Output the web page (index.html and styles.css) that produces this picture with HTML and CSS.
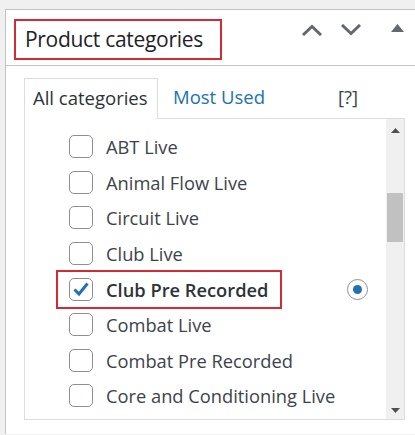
FILE: index.html
```html
<!DOCTYPE html>
<html>
<head>
<meta charset="utf-8">
<link rel="stylesheet" href="styles.css">
</head>
<body>
<div class="postbox">
  <div class="postbox-header">
    <h2 class="hndle"><span class="title-box">Product categories</span></h2>
    <div class="handle-actions">
      <svg class="act act-up" width="22" height="12" viewBox="0 0 22 12"><path d="M2 11 L11 2.5 L20 11" fill="none" stroke="#646970" stroke-width="3"/></svg>
      <svg class="act act-down" width="22" height="12" viewBox="0 0 22 12"><path d="M2 1 L11 9.5 L20 1" fill="none" stroke="#646970" stroke-width="3"/></svg>
      <svg class="act act-toggle" width="13" height="8" viewBox="0 0 13 8"><path d="M0 8 L6.5 0 L13 8 Z" fill="#646970"/></svg>
    </div>
  </div>
  <div class="inside">
    <div class="tabs-row">
      <div class="tab tab-active">All categories</div>
      <div class="tab tab-link">Most Used</div>
      <div class="tab-help">[?]</div>
    </div>
    <div class="tabs-panel">
      <ul class="cat-list">
        <li class="cat"><span class="cb"></span><span class="label">ABT Live</span></li>
        <li class="cat"><span class="cb"></span><span class="label">Animal Flow Live</span></li>
        <li class="cat"><span class="cb"></span><span class="label">Circuit Live</span></li>
        <li class="cat"><span class="cb"></span><span class="label">Club Live</span></li>
        <li class="cat cat-selected">
          <span class="hl-box"><span class="cb cb-checked"><svg width="18" height="16" viewBox="0 0 18 16"><path d="M2.5 8.5 L7 13 L15.5 2.5" fill="none" stroke="#2271b1" stroke-width="3"/></svg></span><span class="label label-bold">Club Pre Recorded</span></span>
          <span class="radio"><span class="radio-dot"></span></span>
        </li>
        <li class="cat"><span class="cb"></span><span class="label">Combat Live</span></li>
        <li class="cat"><span class="cb"></span><span class="label">Combat Pre Recorded</span></li>
        <li class="cat"><span class="cb"></span><span class="label">Core and Conditioning Live</span></li>
        <li class="cat"><span class="cb"></span></li>
      </ul>
      <div class="scrollbar">
        <svg class="sb-arrow" width="9" height="5" viewBox="0 0 9 5"><path d="M0 5 L4.5 0 L9 5 Z" fill="#505050"/></svg>
        <div class="sb-track"><div class="sb-thumb"></div></div>
        <svg class="sb-arrow" width="9" height="5" viewBox="0 0 9 5"><path d="M0 0 L4.5 5 L9 0 Z" fill="#505050"/></svg>
      </div>
    </div>
  </div>
</div>
</body>
</html>
```

FILE: styles.css
```css
html, body {
  margin: 0;
  padding: 0;
}
body {
  background: #f0f0f1;
  font-family: "Open Sans", "Noto Sans", sans-serif;
  color: #3c434a;
  width: 415px;
  height: 435px;
  overflow: hidden;
}
.postbox {
  margin: 9px 0 0 5px;
  background: #fff;
  border: 1px solid #c3c4c7;
  border-right: none;
  border-bottom: none;
  height: 425px;
  box-sizing: border-box;
}
.postbox-header {
  height: 55px;
  border-bottom: 1px solid #c3c4c7;
  display: flex;
  align-items: flex-start;
}
.hndle {
  margin: 9px 0 0 8px;
  font-size: 21px;
  font-weight: 400;
  color: #1d2327;
}
.title-box {
  display: block;
  width: 195px;
  height: 37px;
  box-sizing: content-box;
  border: 2px solid #d42a33;
  padding: 0 0 0 9px;
  line-height: 37px;
  letter-spacing: -0.3px;
}
.handle-actions {
  margin-left: auto;
  display: flex;
  align-items: center;
  height: 36px;
  margin-top: 2px;
}
.act { display: block; }
.act-up { margin-right: 17px; }
.act-down { margin-right: 29px; }
.act-toggle { margin-right: 11px; margin-top: -4px; }

.inside {
  padding: 12px 0 0 18px;
}
.tabs-row {
  display: flex;
  align-items: flex-end;
  width: 381px;
  height: 40px;
  font-size: 18.5px;
}
.tab {
  height: 40px;
  line-height: 38px;
  box-sizing: border-box;
  white-space: nowrap;
}
.tab-active {
  border: 1px solid #dcdcde;
  border-bottom: none;
  padding: 0 8px 0 8px;
  width: 134px;
  color: #2c3338;
  background: #fff;
  position: relative;
  z-index: 1;
  margin-bottom: -1px;
  height: 41px;
}
.tab-link {
  color: #2271b1;
  margin-left: 15px;
}
.tab-help {
  margin-left: auto;
  padding-right: 47px;
  line-height: 38px;
  height: 40px;
  color: #3c434a;
}
.tabs-panel {
  width: 381px;
  height: 302px;
  border: 1px solid #dcdcde;
  box-sizing: border-box;
  display: flex;
  overflow: hidden;
  background: #fff;
}
.cat-list {
  list-style: none;
  margin: 0;
  padding: 10px 0 0 44px;
  flex: 1;
  overflow: hidden;
}
.cat {
  height: 35.6px;
  display: flex;
  align-items: center;
  font-size: 18.3px;
  color: #3c434a;
}
.cb {
  width: 22px;
  height: 21px;
  border: 1px solid #8c8f94;
  border-radius: 5px;
  box-sizing: content-box;
  flex: none;
  display: flex;
  align-items: center;
  justify-content: center;
  background: #fff;
}
.label {
  margin-left: 13px;
  white-space: nowrap;
}
.label-bold {
  font-weight: 600;
  color: #2c3338;
}
.hl-box {
  display: flex;
  align-items: center;
  margin-left: -13px;
  padding: 0 12px 0 11px;
  height: 35px;
  border: 2px solid #d42a33;
}
.radio {
  width: 19px;
  height: 19px;
  border: 1px solid #8c8f94;
  border-radius: 50%;
  margin-left: auto;
  margin-right: 18px;
  display: flex;
  align-items: center;
  justify-content: center;
}
.radio-dot {
  width: 9px;
  height: 9px;
  border-radius: 50%;
  background: #2271b1;
}
.scrollbar {
  width: 18px;
  background: #f0f0f0;
  display: flex;
  flex-direction: column;
  align-items: center;
  padding: 9px 0 6px;
  box-sizing: border-box;
}
.sb-arrow { display: block; flex: none; }
.sb-track {
  flex: 1;
  width: 100%;
  padding-top: 60px;
}
.sb-thumb {
  width: 16px;
  margin-left: 1px;
  height: 49px;
  background: #c1c1c1;
}
```
